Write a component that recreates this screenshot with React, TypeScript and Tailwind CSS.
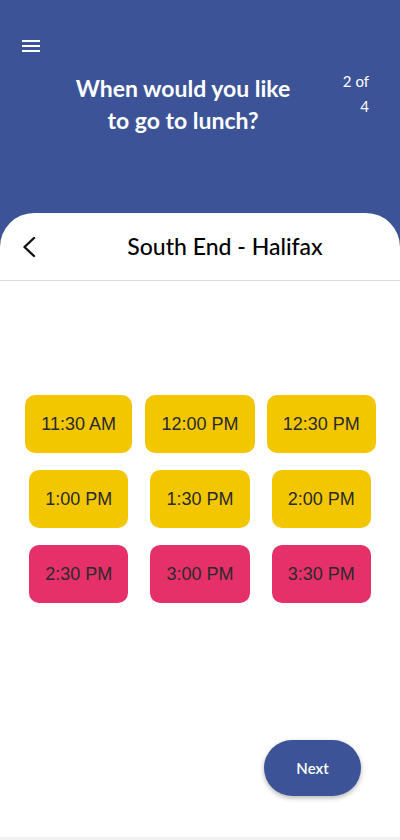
import { MdMenu } from 'react-icons/md'

const SLOTS = [
  { time: '11:30 AM', open: true },
  { time: '12:00 PM', open: true },
  { time: '12:30 PM', open: true },
  { time: '1:00 PM', open: true },
  { time: '1:30 PM', open: true },
  { time: '2:00 PM', open: true },
  { time: '2:30 PM', open: false },
  { time: '3:00 PM', open: false },
  { time: '3:30 PM', open: false },
]

export default function App() {
  return (
    <div className="h-[840px] bg-[#f2f2f5] font-['Lato',sans-serif]">
      <div className="flex h-[837px] flex-col bg-[#3c5497]">
        {/* Header */}
        <div className="h-[213px] shrink-0 pt-[34px]">
          <button className="ml-[19px] block text-white">
            <MdMenu size={24} />
          </button>
          <div className="mt-[6px] flex items-start">
            <h1 className="ml-[68px] mt-[8px] w-[230px] text-center text-[23px] font-bold leading-[32px] text-white">
              When would you like to go to lunch?
            </h1>
            <p className="ml-auto mr-[31px] mt-[5px] text-right text-[15px] leading-[25px] text-white">
              2 of
              <br />4
            </p>
          </div>
        </div>

        {/* Card */}
        <div className="flex flex-1 flex-col rounded-t-[34px] bg-white">
          <div className="flex h-[68px] shrink-0 items-center border-b border-[#dcdcdc]">
            <button className="flex w-[50px] justify-start pl-[21px]">
              <svg width="16" height="22" viewBox="0 0 16 22" fill="none">
                <path d="M13 2 L3.5 11 L13 20" stroke="#111" strokeWidth="2.4" strokeLinecap="round" strokeLinejoin="round" />
              </svg>
            </button>
            <h2 className="flex-1 text-center text-[23px] font-medium text-black">South End - Halifax</h2>
          </div>

          <div className="mt-[114px] grid grid-cols-3 justify-items-center gap-y-[17px] px-[18px]">
            {SLOTS.map(({ time, open }) => (
              <button
                key={time}
                className={`h-[58px] rounded-[10px] px-[16px] font-['Liberation_Sans',Arial,sans-serif] text-[18px] text-[#2a2a2a] ${
                  open ? 'bg-[#f2c700]' : 'bg-[#e6306a]'
                }`}
              >
                {time}
              </button>
            ))}
          </div>

          <div className="mt-auto flex justify-end pb-[41px] pr-[39px]">
            <button className="h-[56px] w-[97px] rounded-full bg-[#3c5497] text-[15px] font-semibold text-white shadow-[0_2px_5px_rgba(0,0,0,0.3)]">
              Next
            </button>
          </div>
        </div>
      </div>
    </div>
  )
}
